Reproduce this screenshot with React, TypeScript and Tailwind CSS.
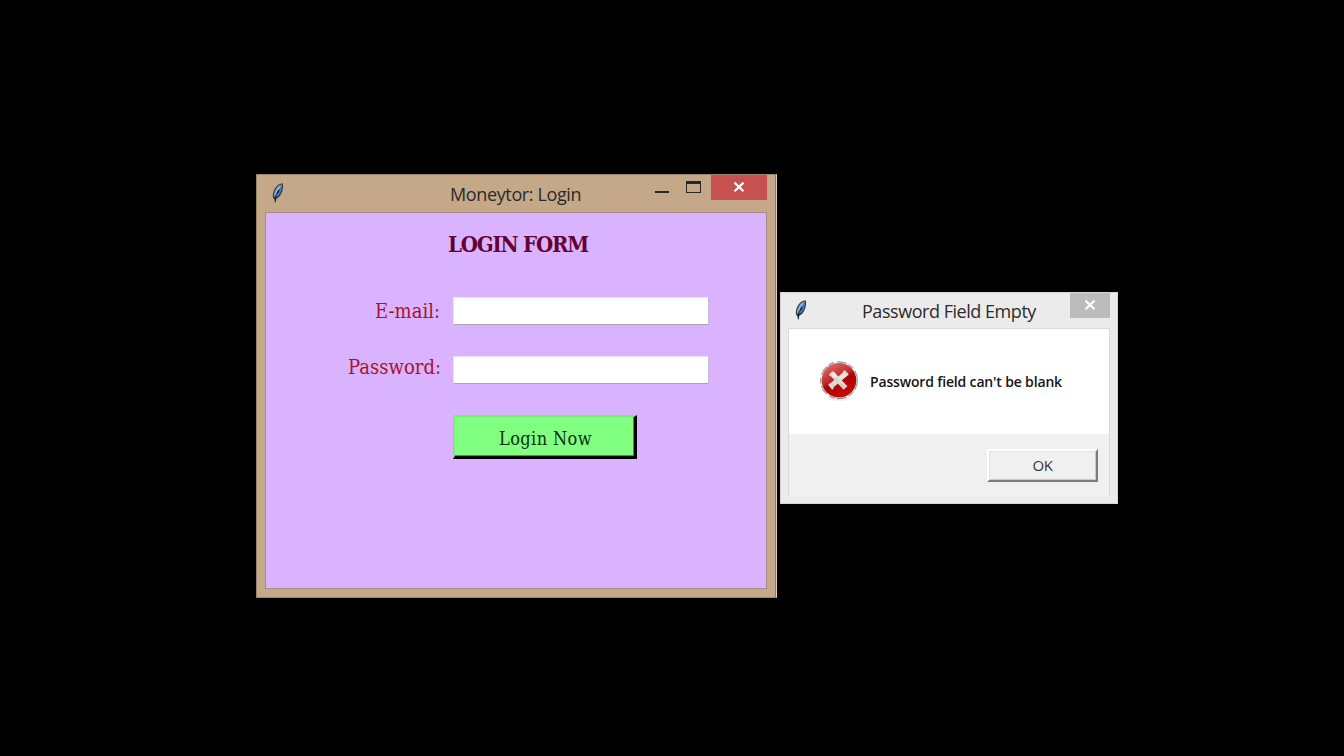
import React from "react";

function Feather({ className = "" }: { className?: string }) {
  return (
    <svg width="12" height="20" viewBox="0 0 12 20" className={className}>
      <path d="M10.7 0.3C7.6 0.4 4.6 2.6 2.9 5.6C1.2 8.6 0.4 12 1 14.8L2.4 16.2L2.9 19.4L4 19.2L4.2 15.8C6.8 14.4 8.8 12.2 9.9 9.2C11 6.4 11.5 3 10.7 0.3Z" fill="#33373d" />
      <path d="M9.6 1.6C7 2.2 4.8 4.2 3.6 6.8C2.2 9.6 1.7 12 2.1 14.4C4 10.8 6.6 7 9 4Z" fill="#85aedb" />
      <path d="M10 2.8C8.4 5.4 5.8 9 3.6 14.4C6.4 12.8 8 10.8 9 8.4C9.8 6.4 10.3 4.6 10 2.8Z" fill="#427cc6" />
      <path d="M7 7L5.2 10.4M4 13.4L3.2 16.6" stroke="#12161d" strokeWidth="1.2" fill="none" />
      <path d="M10 1.8L7.8 3.2" stroke="#8b8580" strokeWidth="1.2" />
    </svg>
  );
}

function CloseGlyph() {
  return (
    <svg width="12" height="10" viewBox="0 0 12 10">
      <path d="M1.5 0.6L10.5 9.2M10.5 0.6L1.5 9.2" stroke="#fff" strokeWidth="2.2" />
    </svg>
  );
}

function ErrorIcon() {
  return (
    <svg width="40" height="42" viewBox="0 0 40 42">
      <defs>
        <linearGradient id="red" x1="0.2" y1="0" x2="0.7" y2="1">
          <stop offset="0" stopColor="#d9706c" />
          <stop offset="0.42" stopColor="#c72a2a" />
          <stop offset="0.55" stopColor="#ad0303" />
          <stop offset="1" stopColor="#cc0808" />
        </linearGradient>
        <linearGradient id="steel" x1="0" y1="0" x2="0" y2="1">
          <stop offset="0" stopColor="#f0eded" />
          <stop offset="1" stopColor="#d2cfcf" />
        </linearGradient>
      </defs>
      <ellipse cx="20" cy="39" rx="11" ry="1.8" fill="#ededed" />
      <circle cx="20" cy="20.3" r="18.4" fill="#f6f6f6" stroke="#999" strokeWidth="1.2" strokeDasharray="10 2 6 3" />
      <circle cx="20" cy="20.3" r="17.3" fill="url(#red)" />
      <path d="M12.5 13L26.5 28M28 12.5L11.5 26.5" stroke="url(#steel)" strokeWidth="5.2" />
      <path d="M10 24L14 29M24.5 11L28.5 15M10.5 15.5L14 12" stroke="#dcd9d9" strokeWidth="2.2" />
      <path d="M16 18L19 21M22 24L24.5 26.5" stroke="#b9b4b4" strokeWidth="0.8" />
    </svg>
  );
}

const serif = "font-['DejaVu_Serif_Condensed','DejaVu_Serif',serif]";

function Row({ label, fit, className }: { label: string; fit: string; className: string }) {
  return (
    <div className={`flex ${className}`}>
      <label className={`relative shrink-0 text-[20px] leading-[28px] whitespace-nowrap text-[#a81228] ${fit}`}>{label}</label>
      <input className="h-[28px] w-[256px] shrink-0 border border-t-[#ece0f5] border-r-[#c9b9d9] border-b-[#aaa4b0] border-l-[#ece0f5] bg-white outline-none" />
    </div>
  );
}

function LoginWindow() {
  return (
    <section className="absolute top-[174px] left-[256px] flex h-[424px] w-[521px] flex-col border border-t-[#9b856c] border-r-[#d9cfc4] border-b-[#9b856c] border-l-[#9b856c] bg-[#c4a888] px-2 pb-2 shadow-[inset_-1px_0_0_#8f7a62]">
      <header className="relative flex h-[37px] shrink-0">
        <Feather className="mt-[8px] ml-[7px]" />
        <h1 className="absolute top-[5px] left-[185px] text-[18px] leading-[28px] tracking-[-0.37px] whitespace-nowrap text-[#2b2a2a] font-['Open_Sans',sans-serif]">Moneytor: Login</h1>
        <div className="mr-px ml-auto flex">
          <div className="mt-[16px] mr-[17px] h-[2px] w-[14px] bg-[#2a2626]" />
          <div className="mt-[6px] mr-[10px] h-[12px] w-[15px] border border-t-[3px] border-[#2a2626]" />
          <button className="flex h-[25px] w-[56px] justify-center bg-[#c75050] pt-[7px] pr-px"><CloseGlyph /></button>
        </div>
      </header>
      <main className={`flex w-[502px] grow flex-col border border-[#a58d80] bg-[#d9b3ff] ${serif}`}>
        <h2 className="mt-[16px] ml-[182px] text-[22px] leading-[30px] font-bold tracking-[-1.2px] whitespace-nowrap text-[#660033]">LOGIN FORM</h2>
        <Row label="E-mail:" className="mt-[38px] ml-[109px]" fit="w-[78px] tracking-[0.02px]" />
        <Row label="Password:" className="mt-[31px] ml-[82px]" fit="-top-[3px] w-[105px] tracking-[0.03px]" />
        <button className="mt-[31px] ml-[187px] flex h-[44px] w-[184px] items-center justify-center border-2 border-t-[#77ec77] border-r-[3px] border-r-black border-b-[3px] border-b-black border-l-[#77ec77] bg-[#80ff80] pt-1 pl-[2px] text-[18px] tracking-[0.4px] text-[#102c10] shadow-[inset_-1px_-1px_0_#3f9a3f]">Login Now</button>
      </main>
    </section>
  );
}

function ErrorDialog() {
  return (
    <section className="absolute top-[292px] left-[780px] flex h-[212px] w-[338px] flex-col border border-[#d5d5d5] bg-[#ebebeb] px-[7px] pb-[7px]">
      <header className="relative flex h-[35px] shrink-0">
        <Feather className="mt-[7px] ml-[7px]" />
        <h1 className="absolute top-[4px] left-[74px] text-[18px] leading-[28px] tracking-[-0.46px] whitespace-nowrap text-[#2b2b2b] font-['Open_Sans',sans-serif]">Password Field Empty</h1>
        <button className="ml-auto flex h-[25px] w-[40px] justify-center bg-[#bcbcbc] pt-[7px]"><CloseGlyph /></button>
      </header>
      <main className="flex grow flex-col border border-b-0 border-[#d9d9d9] bg-[#f0f0f0] font-['Open_Sans',sans-serif]">
        <div className="flex h-[105px] shrink-0 bg-white pt-[31px] pl-[30px]">
          <ErrorIcon />
          <p className="mt-[12px] ml-[11px] text-[14px] leading-[20px] font-semibold tracking-[-0.16px] whitespace-nowrap text-[#151515]">Password field can't be blank</p>
        </div>
        <button className="mt-[15px] ml-[198px] h-[33px] w-[111px] border-2 border-t-white border-r-[#7c7c7c] border-b-[#7c7c7c] border-l-white bg-[#f0f0f0] text-[15px] leading-[29px] tracking-[-0.4px] text-[#333] shadow-[inset_1px_1px_0_#e2e2e2,inset_-1px_-1px_0_#c8c8c8]">OK</button>
      </main>
    </section>
  );
}

export default function App() {
  return (
    <div className="relative h-[756px] w-[1344px] overflow-hidden bg-black">
      <LoginWindow />
      <ErrorDialog />
    </div>
  );
}
